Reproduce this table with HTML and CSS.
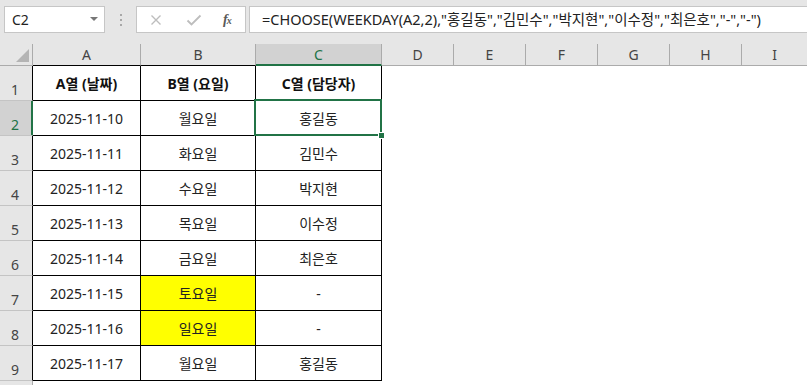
FILE: index.html
```html
<!DOCTYPE html>
<html lang="ko">
<head>
<meta charset="utf-8">
<title>요일별 담당자</title>
<link rel="stylesheet" href="styles.css">
</head>
<body>
<div class="toolbar">
  <div class="namebox">
    <span class="namebox-ref">C2</span>
    <span class="namebox-arrow"></span>
  </div>
  <div class="grip"><i></i><i></i><i></i></div>
  <div class="fx-buttons">
    <svg class="fx-icon" width="12" height="12" viewBox="0 0 12 12"><path d="M1.5 1.5 L10.5 10.5 M10.5 1.5 L1.5 10.5" stroke="#bdbdbd" stroke-width="1.4" fill="none"/></svg>
    <svg class="fx-icon" width="16" height="12" viewBox="0 0 16 12"><path d="M1.5 6.5 L5.5 10.5 L14.5 1.5" stroke="#bdbdbd" stroke-width="1.8" fill="none"/></svg>
    <span class="fx-label">f<sub>x</sub></span>
  </div>
  <div class="formula">=CHOOSE(WEEKDAY(A2,2),"홍길동","김민수","박지현","이수정","최은호","-","-")</div>
</div>

<div class="sheet">
  <div class="corner"><span class="corner-tri"></span></div>
  <div class="colhead in-table">A</div>
  <div class="colhead in-table">B</div>
  <div class="colhead in-table sel">C</div>
  <div class="colhead">D</div>
  <div class="colhead">E</div>
  <div class="colhead">F</div>
  <div class="colhead">G</div>
  <div class="colhead">H</div>
  <div class="colhead last">I</div>

  <div class="rowhead">1</div>
  <div class="cell head">A열 (날짜)</div>
  <div class="cell head">B열 (요일)</div>
  <div class="cell head">C열 (담당자)</div>
  <div class="blank"></div><div class="blank"></div><div class="blank"></div><div class="blank"></div><div class="blank"></div><div class="blank"></div>

  <div class="rowhead sel">2</div>
  <div class="cell">2025-11-10</div>
  <div class="cell">월요일</div>
  <div class="cell active">홍길동<span class="sel-box"><span class="fill-handle"></span></span></div>
  <div class="blank"></div><div class="blank"></div><div class="blank"></div><div class="blank"></div><div class="blank"></div><div class="blank"></div>

  <div class="rowhead">3</div>
  <div class="cell">2025-11-11</div>
  <div class="cell">화요일</div>
  <div class="cell">김민수</div>
  <div class="blank"></div><div class="blank"></div><div class="blank"></div><div class="blank"></div><div class="blank"></div><div class="blank"></div>

  <div class="rowhead">4</div>
  <div class="cell">2025-11-12</div>
  <div class="cell">수요일</div>
  <div class="cell">박지현</div>
  <div class="blank"></div><div class="blank"></div><div class="blank"></div><div class="blank"></div><div class="blank"></div><div class="blank"></div>

  <div class="rowhead">5</div>
  <div class="cell">2025-11-13</div>
  <div class="cell">목요일</div>
  <div class="cell">이수정</div>
  <div class="blank"></div><div class="blank"></div><div class="blank"></div><div class="blank"></div><div class="blank"></div><div class="blank"></div>

  <div class="rowhead">6</div>
  <div class="cell">2025-11-14</div>
  <div class="cell">금요일</div>
  <div class="cell">최은호</div>
  <div class="blank"></div><div class="blank"></div><div class="blank"></div><div class="blank"></div><div class="blank"></div><div class="blank"></div>

  <div class="rowhead">7</div>
  <div class="cell">2025-11-15</div>
  <div class="cell weekend">토요일</div>
  <div class="cell">-</div>
  <div class="blank"></div><div class="blank"></div><div class="blank"></div><div class="blank"></div><div class="blank"></div><div class="blank"></div>

  <div class="rowhead">8</div>
  <div class="cell">2025-11-16</div>
  <div class="cell weekend">일요일</div>
  <div class="cell">-</div>
  <div class="blank"></div><div class="blank"></div><div class="blank"></div><div class="blank"></div><div class="blank"></div><div class="blank"></div>

  <div class="rowhead">9</div>
  <div class="cell">2025-11-17</div>
  <div class="cell">월요일</div>
  <div class="cell">홍길동</div>
  <div class="blank"></div><div class="blank"></div><div class="blank"></div><div class="blank"></div><div class="blank"></div><div class="blank"></div>

  <div class="rowhead next"></div>
</div>
</body>
</html>
```
FILE: styles.css
```css
* { box-sizing: border-box; }

html, body {
  margin: 0;
  padding: 0;
  background: #ffffff;
  overflow: hidden;
}

body {
  width: 807px;
  height: 385px;
  font-family: "Noto Sans", "Noto Sans CJK KR", sans-serif;
}

/* ---------- formula bar ---------- */
.toolbar {
  height: 44px;
  background: #e6e6e6;
  display: flex;
  align-items: flex-start;
  padding: 6px 0 0 4px;
}

.namebox {
  width: 101px;
  height: 27px;
  background: #fff;
  border: 1px solid #c6c6c6;
  display: flex;
  align-items: center;
  justify-content: space-between;
  padding: 0 6px 0 7px;
}

.namebox-ref {
  font-size: 14px;
  color: #222;
  line-height: 1;
}

.namebox-arrow {
  width: 0;
  height: 0;
  border-left: 4px solid transparent;
  border-right: 4px solid transparent;
  border-top: 4px solid #777;
  margin-top: -2px;
}

.grip {
  width: 31px;
  height: 27px;
  display: flex;
  flex-direction: column;
  align-items: center;
  justify-content: center;
  gap: 3px;
}

.grip i {
  width: 2px;
  height: 2px;
  background: #a8a8a8;
}

.fx-buttons {
  width: 110px;
  height: 27px;
  background: #fff;
  border: 1px solid #c6c6c6;
  display: flex;
  align-items: center;
  padding: 0 0 0 13px;
}

.fx-icon { display: block; }
.fx-icon + .fx-icon { margin-left: 24px; }

.fx-label {
  margin-left: 21px;
  font-family: "Liberation Serif", serif;
  font-style: italic;
  font-weight: bold;
  font-size: 14px;
  color: #595959;
  line-height: 1;
}

.fx-label sub {
  font-size: 10px;
  vertical-align: baseline;
  margin-left: -1px;
}

.formula {
  flex: 1;
  margin-left: 3px;
  height: 27px;
  background: #fff;
  border: 1px solid #c6c6c6;
  border-right: none;
  padding-left: 12px;
  font-size: 14.5px;
  line-height: 25px;
  color: #222;
  white-space: nowrap;
  overflow: hidden;
}

/* ---------- grid ---------- */
.sheet {
  display: grid;
  grid-template-columns: 33px 108px 115px 126px 72px 72px 72px 72px 72px 1fr;
  grid-template-rows: 22px repeat(9, 35px) 10px;
}

.corner {
  background: #e6e6e6;
  border-right: 1px solid #ababab;
  border-bottom: 1px solid #ababab;
  position: relative;
}

.corner-tri {
  position: absolute;
  right: 3px;
  bottom: 3px;
  width: 0;
  height: 0;
  border-left: 13px solid transparent;
  border-bottom: 13px solid #b4b4b4;
}

.colhead {
  background: #e6e6e6;
  border-right: 1px solid #ababab;
  border-bottom: 1px solid #ababab;
  display: flex;
  align-items: center;
  justify-content: center;
  font-size: 14px;
  color: #444;
  padding-bottom: 1px;
}

.colhead.in-table { border-bottom-color: #000; }
.colhead.last { border-right: none; }

.colhead.sel {
  background: #d2d2d2;
  color: #217346;
  border-bottom: 2px solid #217346;
  padding-bottom: 0;
}

.rowhead {
  background: #e6e6e6;
  border-right: 1px solid #000;
  border-bottom: 1px solid #c4c4c4;
  display: flex;
  align-items: flex-end;
  justify-content: center;
  font-size: 14px;
  line-height: 16px;
  color: #444;
  padding-bottom: 2px;
  padding-right: 2px;
}

.rowhead.sel {
  background: #d2d2d2;
  color: #217346;
  border-right-color: #217346;
  box-shadow: inset -1px 0 #217346;
}

.rowhead.next { border-right-color: #ababab; border-bottom: none; }

.cell {
  border-right: 1px solid #000;
  border-bottom: 1px solid #000;
  display: flex;
  align-items: center;
  justify-content: center;
  font-size: 14px;
  color: #222;
  white-space: nowrap;
}

.cell.head { font-weight: bold; color: #111; }

.cell.weekend { background: #ffff00; }

.cell.active { position: relative; }

.sel-box {
  position: absolute;
  left: -2px;
  top: -2px;
  right: -1px;
  bottom: -1px;
  border: 2px solid #217346;
  pointer-events: none;
}

.fill-handle {
  position: absolute;
  right: -5px;
  bottom: -5px;
  width: 7px;
  height: 7px;
  background: #217346;
  border: 1px solid #fff;
}

.blank { background: #fff; }
```
